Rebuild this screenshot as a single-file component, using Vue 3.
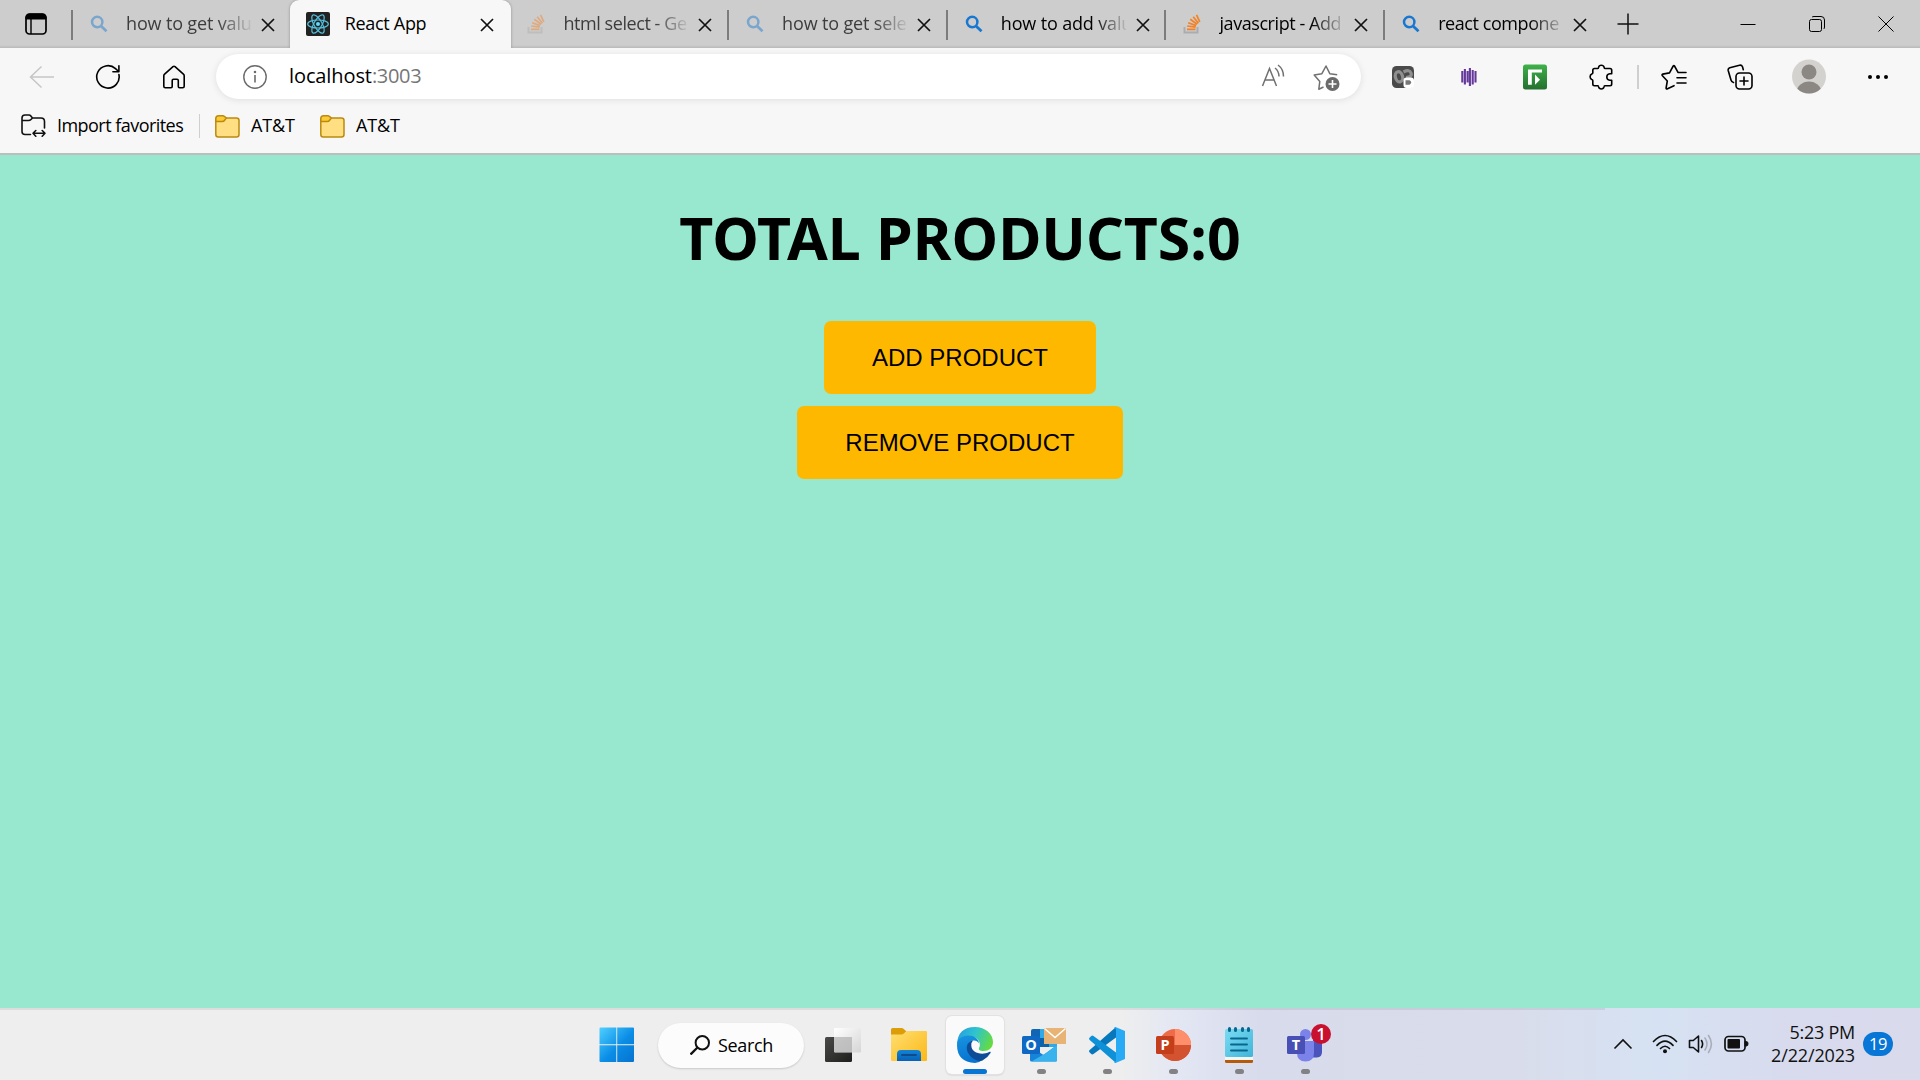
<script setup>
const tabs = [
  { title: 'how to get valu', icon: 'search', faded: true, roomy: true },
  { title: 'React App', icon: 'react', active: true },
  { title: 'html select - Ge', icon: 'stack', faded: true },
  { title: 'how to get sele', icon: 'search', faded: true, roomy: true },
  { title: 'how to add valu', icon: 'search', roomy: true },
  { title: 'javascript - Add', icon: 'stack' },
  { title: 'react compone', icon: 'search' },
]
const bookmarks = ['AT&T', 'AT&T']
const total = 0
</script>

<template>
  <div class="screen">
    <header class="tabstrip">
      <div class="tab-actions">
        <svg width="22" height="22" viewBox="0 0 22 22"><rect x="1" y="1" width="20" height="20" rx="3.5" fill="none" stroke="#000" stroke-width="1.7" /><path d="M1 6V4.5A3.5 3.5 0 0 1 4.500 1h13A3.500 3.500 0 0 1 21 4.500V6z" fill="#000" stroke="#000" /><path d="M6 6v15" stroke="#000" stroke-width="1.400" /></svg>
      </div>
      <div v-for="(tab, i) in tabs" :key="i" class="tab" :class="{ active: tab.active, faded: tab.faded, roomy: tab.roomy, 'no-line': i === 2 }">
        <span class="favicon">
          <svg v-if="tab.icon === 'search'" width="18" height="18" viewBox="0 0 18 18" fill="none" stroke="#1777d1"><circle cx="7.200" cy="7" r="5.200" stroke-width="2.500" /><path d="M11 11l5.500 5.200" stroke-width="2.800" /></svg>
          <svg v-else-if="tab.icon === 'react'" width="24" height="24" viewBox="0 0 24 24"><rect width="24" height="24" rx="2" fill="#222" /><g fill="none" stroke="#53c1de" stroke-width="1.200"><ellipse cx="12" cy="12" rx="10.300" ry="4" /><ellipse cx="12" cy="12" rx="10.300" ry="4" transform="rotate(60 12 12)" /><ellipse cx="12" cy="12" rx="10.300" ry="4" transform="rotate(120 12 12)" /></g><circle cx="12" cy="12" r="2" fill="#61dafb" /></svg>
          <svg v-else width="18" height="20" viewBox="0 0 18 20" fill="none"><path d="M1.500 13v5.500h13V13" stroke="#a9adb2" stroke-width="2" /><path d="M4 15.300h8.500M4.200 12l8.400 1.200M5.200 8.700l7.900 2.900M7.300 5.300l6.800 5M10.200 2.800l5.200 6.400M13.500 .8l3.300 7" stroke="#f48024" stroke-width="1.700" /></svg>
        </span>
        <span class="tab-title">{{ tab.title }}</span>
        <svg class="tab-close" width="14" height="14" viewBox="0 0 14 14"><path d="M1 1l12 12M13 1L1 13" stroke="#111" stroke-width="1.700" /></svg>
      </div>
      <div class="new-tab"><svg width="22" height="22" viewBox="0 0 22 22"><path d="M11 .5v21M.5 11h21" stroke="#111" stroke-width="1.500" /></svg></div>
      <div class="window-controls">
        <span><svg width="16" height="16" viewBox="0 0 16 16"><path d="M.5 8.500h15" stroke="#000" /></svg></span>
        <span><svg width="16" height="16" viewBox="0 0 16 16" fill="none" stroke="#000"><rect x=".5" y="3.500" width="12" height="12" rx="2" /><path d="M3 1.200Q3.500.5 5 .5h7q3.500 0 3.500 3.500v7q0 1.500-.8 2" /></svg></span>
        <span><svg width="16" height="16" viewBox="0 0 16 16"><path d="M.5.5l15 15M15.500.5l-15 15" stroke="#000" /></svg></span>
      </div>
    </header>

    <div class="toolbar">
      <span class="tool"><svg width="26" height="24" viewBox="0 0 26 24" fill="none" stroke="#c6c6c6" stroke-width="1.500"><path d="M25 12H1.500M12.500 1.500L1.500 12l11 10.500" /></svg></span>
      <span class="tool"><svg width="26" height="26" viewBox="0 0 26 26" fill="none" stroke="#000" stroke-width="1.600" stroke-linecap="round" stroke-linejoin="round"><path d="M23.900 10.500A11.200 11.200 0 1 1 20.500 4.600L23.700 7.500M23.900 1.800v5.900h-6" /></svg></span>
      <span class="tool"><svg width="24" height="24" viewBox="0 0 24 24" fill="none" stroke="#000" stroke-width="1.600" stroke-linejoin="round"><path d="M1.800 10.800Q1.800 9.800 2.600 9.100L11 1.600q1-.8 2 0l8.400 7.500q.8.700.8 1.700v10.400q0 1.500-1.500 1.500h-3.200q-1.200 0-1.200-1.200V15.500q0-1.300-1.300-1.300h-3.500q-1.300 0-1.300 1.300v6q0 1.200-1.200 1.200H3.300q-1.500 0-1.500-1.500z" /></svg></span>
      <div class="address">
        <svg width="24" height="24" viewBox="0 0 24 24" fill="none" stroke="#6b6b6b" stroke-width="1.400"><circle cx="12" cy="12" r="11.200" /><path d="M12 10v7.500" stroke-width="1.600" /><circle cx="12" cy="7" r=".6" /></svg>
        <p class="url">localhost<span>:3003</span></p>
        <svg class="read" width="24" height="24" viewBox="0 0 24 24" fill="none" stroke="#707070" stroke-width="1.500"><path d="M1.500 22L8.500 4.500 15.500 22M4 16h9M14 4q4 3.200 4 8.500M17 1q5.500 4 5.500 11.500" /></svg>
        <svg class="add-fav" width="27" height="27" viewBox="0 0 27 27" fill="none" stroke="#707070" stroke-width="1.500" stroke-linejoin="round"><path d="M10.500 23l-4.700 2.200 1-7.800L1.200 11l7.700-1.300L13 2l3.800 7.700 7.400 1" /><circle cx="19.500" cy="20" r="7" fill="#6b6b6b" stroke="none" /><path d="M19.500 16v8M15.500 20h8" stroke="#fff" stroke-width="1.600" /></svg>
      </div>
      <span class="tool"><svg width="22" height="22" viewBox="0 0 22 22"><rect width="22" height="22" rx="4.500" fill="#4a4a4a" /><g fill="none" stroke="#8f8f8f" stroke-width="3.200"><ellipse cx="7" cy="10.800" rx="3.600" ry="5.200" transform="rotate(-14 7 10.800)" /><path d="M11.500 6q6-3 7.500 1t-5 4.500" /></g><rect x="11.500" y="11.500" width="10.500" height="10.500" rx="3" fill="#fff" /><path d="M13.500 14.300h4q3.500 2 0 4.500h-4z" fill="#777" /></svg></span>
      <span class="tool"><svg width="16" height="20" viewBox="0 0 16 20" stroke="#65399a" stroke-width="2.100"><path d="M1.300 4v11.500M3.900 2v15.500M6.600 4v11.500M8.900 1v18M11.700 3v14.500M14.500 4v11.500" /></svg></span>
      <span class="tool"><svg width="24" height="26" viewBox="0 0 24 26"><defs><linearGradient id="greenExt" x2="0" y2="1"><stop stop-color="#3fb24a" /><stop offset="1" stop-color="#24702f" /></linearGradient></defs><rect y=".5" width="24" height="25" rx="2.500" fill="url(#greenExt)" /><path d="M5 5.500h14v3H8.800v12.300H5z" fill="#fff" /><path d="M12 10.500l5 5.200-5 5.100z" fill="#fff" /></svg></span>
      <span class="tool"><svg width="24" height="26" viewBox="0 0 24 26" fill="none" stroke="#000" stroke-width="1.600" stroke-linejoin="round"><path d="M5.500 4.500h3.400q.6 0 .7-1.200Q10 1.200 12.300 1.200t2.800 2.100q.1 1.200.7 1.200H21q1.700 0 1.700 1.700v3.600h-2q-2.900.4-2.900 3.200t2.900 3.200h2v3.800q0 1.700-1.700 1.700h-5.200q-.7 0-.8 1.200-.5 2.100-2.700 2.100t-2.700-2.100q-.1-1.200-.7-1.200H5.500q-1.700 0-1.700-1.700v-3.500q0-.7-1-1-1.700-.7-1.700-2.700t1.700-2.700q1-.3 1-1V6.200q0-1.700 1.700-1.700z" /></svg></span>
      <i class="tool-line"></i>
      <span class="tool"><svg width="26" height="26" viewBox="0 0 26 26" fill="none" stroke="#000" stroke-width="1.600" stroke-linejoin="round" stroke-linecap="round"><path d="M13 21.700L6 25q-1 0-.9-1l1.200-7L1.200 11.500q-.5-1 .6-1.400l6.700-1.200L12.200 2q.7-.8 1.300 0L17 8.300M17 8.500h8M16 13.700h9M16 19h9" /></svg></span>
      <span class="tool"><svg width="26" height="26" viewBox="0 0 26 26" fill="none" stroke="#000" stroke-width="1.600" stroke-linecap="round"><path d="M6.500 18.500Q4.500 18 4 16L1.200 6.500Q.8 4.500 2.800 3.800L12.500 1.200q2.200-.4 3 1.500l.8 3" /><rect x="9" y="9" width="16" height="16" rx="3.500" /><path d="M17 13v8M13 17h8" /></svg></span>
      <span class="tool avatar-slot"><svg width="34" height="35" viewBox="0 0 34 35"><defs><clipPath id="avatarClip"><circle cx="17" cy="17.500" r="17" /></clipPath></defs><g clip-path="url(#avatarClip)"><rect width="34" height="35" fill="#d4d2cf" /><circle cx="17" cy="13" r="7.500" fill="#8b8783" /><ellipse cx="17" cy="34" rx="12.500" ry="11.500" fill="#8b8783" /></g></svg></span>
      <span class="tool"><svg width="22" height="6" viewBox="0 0 22 6"><circle cx="3" cy="3" r="2" /><circle cx="11" cy="3" r="2" /><circle cx="19" cy="3" r="2" /></svg></span>
    </div>

    <nav class="bookmarks">
      <svg width="25" height="24" viewBox="0 0 25 24" fill="none" stroke="#111" stroke-width="1.600" stroke-linejoin="round" stroke-linecap="round"><path d="M9.500 20.500H4Q1 20.500 1 17.500V4q0-3 3-3h4q1 0 1.800.9L11.500 4H20q3.500 0 3.500 3.500V14M1 6.500h6.500q1.500 0 2.500-1L11.500 4M12 19.300h12M14.800 16.500L12 19.300l2.800 2.900M21.200 16.500l2.800 2.800-2.800 2.900" /></svg>
      <span class="import">Import favorites</span>
      <i class="mark-line"></i>
      <a v-for="(name, i) in bookmarks" :key="i" class="mark">
        <svg width="25" height="23" viewBox="0 0 25 23" fill="#ffdf82" stroke="#bb8a10" stroke-width="1.500" stroke-linejoin="round"><rect x=".8" y="3" width="23.200" height="19" rx="2.500" /><path d="M.8 6.500V3.500q0-2.700 2.700-2.700h4.300q1 0 1.900.9L11.300 3 9.800 5q-1 1.500-2.600 1.500z" fill="#fcca35" /></svg>
        <span>{{ name }}</span>
      </a>
    </nav>

    <main class="page">
      <h1>TOTAL PRODUCTS:{{ total }}</h1>
      <button>ADD PRODUCT</button>
      <button>REMOVE PRODUCT</button>
    </main>

    <footer class="taskbar">
      <div class="dock">
        <svg class="start" width="36" height="36" viewBox="0 0 36 36"><defs><linearGradient id="win" x2="1" y2="1"><stop stop-color="#4fd0ff" /><stop offset=".55" stop-color="#0a8de6" /><stop offset="1" stop-color="#0673cf" /></linearGradient></defs><path d="M1.500.5h15.800v16.800H.5v-15.800q0-1 1-1zM18.200.5h15.800q1 0 1 1v15.800H18.200zM.5 18.200h16.800V35H1.500q-1 0-1-1zM18.200 18.200H35V34q0 1-1 1H18.200z" fill="url(#win)" /></svg>
        <div class="search"><svg width="20" height="20" viewBox="0 0 20 20" fill="none" stroke="#111" stroke-width="2"><circle cx="12.300" cy="7.700" r="6.700" /><path d="M7.500 12.500l-7 7" stroke-width="2.300" /></svg><span>Search</span></div>
        <div class="app"><svg width="36" height="36" viewBox="0 0 36 36"><defs><linearGradient id="darkPane" x2="1" y2="1"><stop stop-color="#4a4a48" /><stop offset="1" stop-color="#1e1e1c" /></linearGradient><linearGradient id="litePane" x2="1" y2="1"><stop stop-color="#fff" /><stop offset="1" stop-color="#d5d5d5" /></linearGradient></defs><rect y="10" width="27" height="25" rx="1.500" fill="url(#darkPane)" /><rect x="9" y="1" width="27" height="24.500" rx="1" fill="url(#litePane)" /><path d="M9 10h18v15H9z" fill="#aaa" opacity=".65" /></svg></div>
        <div class="app"><svg width="36" height="36" viewBox="0 0 36 36"><defs><linearGradient id="fold" x2="1" y2="1"><stop stop-color="#ffdf72" /><stop offset="1" stop-color="#fcb817" /></linearGradient><linearGradient id="foldBlue" x2="0" y2="1"><stop stop-color="#1184d8" /><stop offset="1" stop-color="#0862b5" /></linearGradient></defs><path d="M0 2.500Q0 1 1.500 1h9q1.200 0 2 .8L15.500 4.500 12 9H0z" fill="#dd9d08" /><path d="M0 7.500h10.500q1.200 0 2-.8L15.500 4H35q1 0 1 1v28q0 1-1 1H1q-1 0-1-1z" fill="url(#fold)" /><path d="M6 34v-7q0-4 4-4h16q4 0 4 4v7z" fill="url(#foldBlue)" /><path d="M11 28h14" stroke="#114a8b" stroke-width="1.800" stroke-linecap="round" /></svg></div>
        <div class="app current"><svg width="36" height="36" viewBox="0 0 36 36"><defs><linearGradient id="edgeTop" x1="0" y1=".3" x2="1" y2=".6"><stop stop-color="#289ee0" /><stop offset=".45" stop-color="#2ec4cf" /><stop offset="1" stop-color="#67dc3c" /></linearGradient><linearGradient id="edgeLow" x2=".2" y2="1"><stop stop-color="#1795e0" /><stop offset="1" stop-color="#0873d1" /></linearGradient></defs><path d="M0 17Q1 0 18 0c10.500 0 18 7 18 15 0 6-4.500 9-9.500 9-4 0-5.500-1.500-4.500-3.500 2-4 0-9.500-6-10.500Q5 9 0 17z" fill="url(#edgeTop)" /><path d="M0 18C0 12 5 8.500 11 8.500c6 0 11 3.500 11 8-1-2-3-3-5-3-6 0-7.500 7-4 12 4 5.500 10.500 7.500 13 7Q22 36 18 36 0 35 0 18z" fill="url(#edgeLow)" /><path d="M16 13.500c-6 1-8 7.500-4.500 13 3.500 6 10.500 8.500 14 7q5-2.500 8-7.500c.5-1-.3-1.500-1.200-1-8 4-18 .5-18-6.500q0-3.500 1.700-5z" fill="#0d4c96" /><path d="M22 17c1.500 3.500-1 4.500 0 6 1 1.800 6 2 8.500.5-5 3.500-12 1.500-14.500-2-2.500-4.500 4-8 6-4.500z" fill="#fafafa" /></svg></div>
        <div class="app run"><svg class="outlook" width="46" height="36" viewBox="0 0 46 36"><path d="M10 4q0-2 2-2h22q2 0 2 2v16H10z" fill="#1066b5" /><path d="M19 2h17v18H19z" fill="#32a9e7" /><path d="M19 11h9v9h-9z" fill="#0a64ad" /><path d="M9 19l13.500 9L36 18v15q0 1.500-1.500 1.500h-24Q9 34.500 9 33z" fill="#1684d8" /><path d="M36 18v15q0 1.500-1.500 1.500h-24L25 26z" fill="#38b3ee" /><rect x="1" y="9" width="18" height="18" rx="1.500" fill="#0f69c4" /><rect x="23" y="1" width="22" height="16" fill="#e8b475" /><path d="M23.500 1.500L34 10.500 44.500 1.500" fill="none" stroke="#fff" stroke-width="1.500" /><text x="10" y="22.800" class="letter">O</text></svg></div>
        <div class="app run"><svg width="36" height="36" viewBox="0 0 36 36"><path d="M27 0v10.500L4.500 27Q3.200 28 2 26.700L.5 25.300q-1-1.200.2-2.200z" fill="#0878bd" /><path d="M27 36V25.500L4.500 9Q3.200 8 2 9.300L.5 10.700q-1 1.200.2 2.200z" fill="#0f91d8" /><path d="M26.500 0L36 4v28l-9.500 4q-1 0-1.500-.8 2 0 2-2V2.800q0-2-2-2 .5-.8 1.500-.8z" fill="#29aaf4" /></svg></div>
        <div class="app run"><svg width="36" height="36" viewBox="0 0 36 36"><circle cx="20" cy="18" r="16" fill="#ed6c47" /><path d="M20 2a16 16 0 0 1 16 16H20z" fill="#ff8f6b" /><path d="M4 18a16 16 0 0 0 32 0z" fill="#d35230" /><rect x="1" y="9" width="18" height="18" rx="1.500" fill="#c43e1c" /><text x="10" y="22.800" class="letter">P</text></svg></div>
        <div class="app run"><svg width="28" height="36" viewBox="0 0 28 36"><defs><linearGradient id="note" x2="1" y2="1"><stop stop-color="#7bdcf3" /><stop offset="1" stop-color="#41b4d8" /></linearGradient></defs><rect y="28" width="28" height="8" rx="1.500" fill="#b45b0d" /><path d="M0 27h28v6H0z" fill="#f5f5f5" /><rect y="2" width="28" height="28" rx="1.500" fill="url(#note)" /><path d="M6 11.500h16M6 17.500h16M6 23.500h16" stroke="#08678f" stroke-width="1.900" stroke-linecap="round" /><path d="M4.500 1.500v2M10.500 1.500v2M17.500 1.500v2M23.500 1.500v2" stroke="#08678f" stroke-width="3" stroke-linecap="round" /></svg></div>
        <div class="app run"><svg class="teams" width="38" height="36" viewBox="0 0 38 36"><path d="M27 13h9v12q0 5-5 5.500h-5z" fill="#4b53bc" /><circle cx="19.500" cy="7.500" r="5.500" fill="#7b83eb" /><path d="M11 14h17v12q0 8.500-8.500 8.500T11 26z" fill="#7b83eb" /><rect x="1" y="9" width="18" height="18" rx="1.500" fill="#484fb5" /><text x="10" y="22.800" class="letter">T</text></svg><b class="count">1</b></div>
      </div>
      <div class="tray">
        <svg width="20" height="12" viewBox="0 0 20 12" fill="none" stroke="#111" stroke-width="1.600"><path d="M1.500 10.500L10 2l8.500 8.500" /></svg>
        <svg class="wifi" width="26" height="20" viewBox="0 0 26 20" fill="none" stroke="#111" stroke-width="1.700" stroke-linecap="round"><path d="M1.500 7.500q11.500-12 23 0M5 11.300q8-8.500 16 0M8.500 14.500q4.500-4.500 9 0" /><circle cx="13" cy="17.300" r="2" fill="#111" stroke="none" /></svg>
        <svg class="volume" width="26" height="22" viewBox="0 0 26 22" fill="none" stroke="#111" stroke-width="1.600" stroke-linejoin="round" stroke-linecap="round"><path d="M1.500 7.500h3.800L10.500 3v16l-5.200-4.500H1.500zM13.500 7.500q2.200 3.500 0 7" /><path d="M17 5q4 6 0 12M20.500 2.500q5.800 8.500 0 17" stroke="#a9adb8" /></svg>
        <svg class="battery" width="25" height="18" viewBox="0 0 25 18" fill="none" stroke="#111"><rect x="1" y="1.500" width="20" height="14.500" rx="3.500" stroke-width="1.700" /><rect x="3.500" y="4" width="12.500" height="9.500" rx="1" fill="#111" stroke="none" /><path d="M21 6.500h1.500q1.500 0 1.500 2.200t-1.500 2.300H21z" fill="#111" /></svg>
        <div class="clock"><span>5:23 PM</span><span class="date">2/22/2023</span></div>
        <b class="notices">19</b>
      </div>
    </footer>
  </div>
</template>

<style>
body { margin: 0; overflow: hidden; }
</style>

<style scoped>
.screen { width: 1920px; height: 1080px; display: flex; flex-direction: column; overflow: hidden; background: #f7f7f7; color: #000; font: 18px/24px "Open Sans", "Noto Sans", sans-serif; letter-spacing: -.43px; }
svg { display: block; flex: none; }
.tabstrip { flex: none; height: 48px; display: flex; background: linear-gradient(#cdcdcd 45px, #b9b9b9 48px); }
.tab-actions { width: 71px; box-sizing: border-box; padding: 13px 0 0 25px; flex: none; }
.tab { position: relative; width: 218.700px; flex: none; height: 48px; display: flex; align-items: center; box-sizing: border-box; padding-bottom: 1px; }
.tab::before { content: ""; width: 2px; height: 30px; background: #7c7c7c; margin-top: 3px; }
.tab.no-line::before, .tab.active::before { background: none; }
.tab.active { background: #f7f7f7; border-radius: 9px 9px 0 0; box-shadow: 0 0 3px rgba(0,0,0,.3); width: 221px; margin-right: -2.300px; clip-path: inset(0 -4px 0 -4px); }
.favicon { width: 24px; margin: 0 15px 0 14px; display: flex; justify-content: center; }
.tab-title { width: 125px; height: 26px; overflow: hidden; white-space: nowrap; -webkit-mask-image: linear-gradient(90deg, #000 92px, transparent 128px); mask-image: linear-gradient(90deg, #000 92px, transparent 128px); }
.roomy .tab-title { letter-spacing: -.15px; }
.active .tab-title { -webkit-mask-image: none; mask-image: none; letter-spacing: -.3px; }
.tab-close { margin: 3px 0 0 10px; }
.faded .favicon { opacity: .45; }
.faded .tab-title { color: #3d3d3d; }
.new-tab { width: 52px; display: flex; align-items: center; justify-content: center; flex: none; }
.window-controls { margin-left: auto; display: flex; }
.window-controls span { width: 69px; display: flex; align-items: center; justify-content: center; padding-bottom: 1px; }
.toolbar { flex: none; height: 57px; display: flex; align-items: center; padding-left: 9px; }
.tool { width: 66px; flex: none; display: flex; align-items: center; justify-content: center; }
.address { width: 1145px; height: 45px; margin: 0 9px; box-sizing: border-box; flex: none; border-radius: 23px; background: #fff; box-shadow: 0 1px 7px rgba(0,0,0,.1); display: flex; align-items: center; padding: 0 21px 0 27px; }
.url { margin: -1px 0 0 22px; font-size: 20px; letter-spacing: -.1px; line-height: 28px; }
.url span { color: #767676; letter-spacing: -.3px; }
.read { margin-left: auto; margin-top: -2px; }
.add-fav { margin-left: 28px; margin-top: 2px; }
.tool-line { width: 2px; height: 24px; margin: 0 2px 0 3px; background: #cfcfcf; }
.avatar-slot { width: 72px; }
.bookmarks { flex: none; height: 50px; box-sizing: border-box; border-bottom: 2px solid #bdbdbd; display: flex; align-items: center; padding: 0 0 6px 21px; }
.import { margin: -2px 0 0 11px; width: 131px; white-space: nowrap; letter-spacing: -.54px; }
.mark-line { width: 1px; height: 24px; background: #cfcfcf; margin: 0 15px 0 11px; }
.mark { display: flex; align-items: center; width: 105px; letter-spacing: -.1px; }
.mark span { margin: -2px 0 0 11px; }
.page { flex: none; height: 853px; background: #97e8cf; display: flex; flex-direction: column; align-items: center; }
h1 { margin: 42px 0 43px; font: 700 59px/81px "Noto Sans", sans-serif; letter-spacing: 0; }
button { height: 73px; border: 0; border-radius: 7px; padding: 0 48px; margin-bottom: 12px; background: #ffb800; color: #000; font: 24px/28px "Liberation Sans", Arial, sans-serif; }
.taskbar { flex: none; height: 72px; display: flex; position: relative; background: linear-gradient(90deg, #eee 0, #eee 1120px, #e3e7f4 1180px, #d8dbeb 1260px, #d9dcea 1500px, #d6e2f3 1660px, #d8daed 1800px, #d9daec 1920px); }
.taskbar::before { content: ""; position: absolute; left: 0; top: 0; width: 1605px; height: 2px; background: rgba(0,0,0,.07); }
.dock { display: flex; align-items: center; padding-left: 599px; height: 74px; }
.search { width: 146px; height: 45px; margin: 0 10px 0 23px; border-radius: 23px; box-sizing: border-box; background: #fcfcfc; box-shadow: 0 1px 2px rgba(0,0,0,.16); display: flex; align-items: center; padding-left: 32px; letter-spacing: -.35px; }
.search span { margin-left: 8px; }
.app { width: 58px; height: 58px; margin-right: 8px; border-radius: 6px; position: relative; display: flex; align-items: center; justify-content: center; box-sizing: border-box; }
.current { background: #fafafa; box-shadow: 0 0 0 1px #e2e2e2, 0 1px 2px rgba(0,0,0,.2); }
.current::after, .run::after { content: ""; position: absolute; bottom: 0; left: 24.500px; width: 9px; height: 5px; border-radius: 3px; background: #828285; }
.current::after { width: 24px; left: 17px; background: #0875d5; }
.outlook { margin-left: 6px; }
.letter { font: 700 14.500px "Open Sans", sans-serif; letter-spacing: 0; fill: #fff; text-anchor: middle; }
.count { position: absolute; left: 35px; top: 8px; width: 20px; height: 20px; border-radius: 50%; background: #c9102f; color: #fff; font: 600 17px/20px "Open Sans", sans-serif; text-align: center; }
.tray { margin-left: auto; display: flex; align-items: center; padding: 0 27px 0 0; }
.wifi { margin-left: 19px; }
.volume { margin-left: 10px; }
.battery { margin-left: 10px; }
.clock { width: 106px; display: flex; flex-direction: column; line-height: 23px; text-align: right; letter-spacing: -.25px; color: #111; }
.date { letter-spacing: -.15px; }
.notices { margin-left: 8px; width: 30px; height: 24px; border-radius: 12px; background: #0876d6; color: #fff; font: 400 16.500px/24px "Open Sans", sans-serif; text-align: center; }
</style>
